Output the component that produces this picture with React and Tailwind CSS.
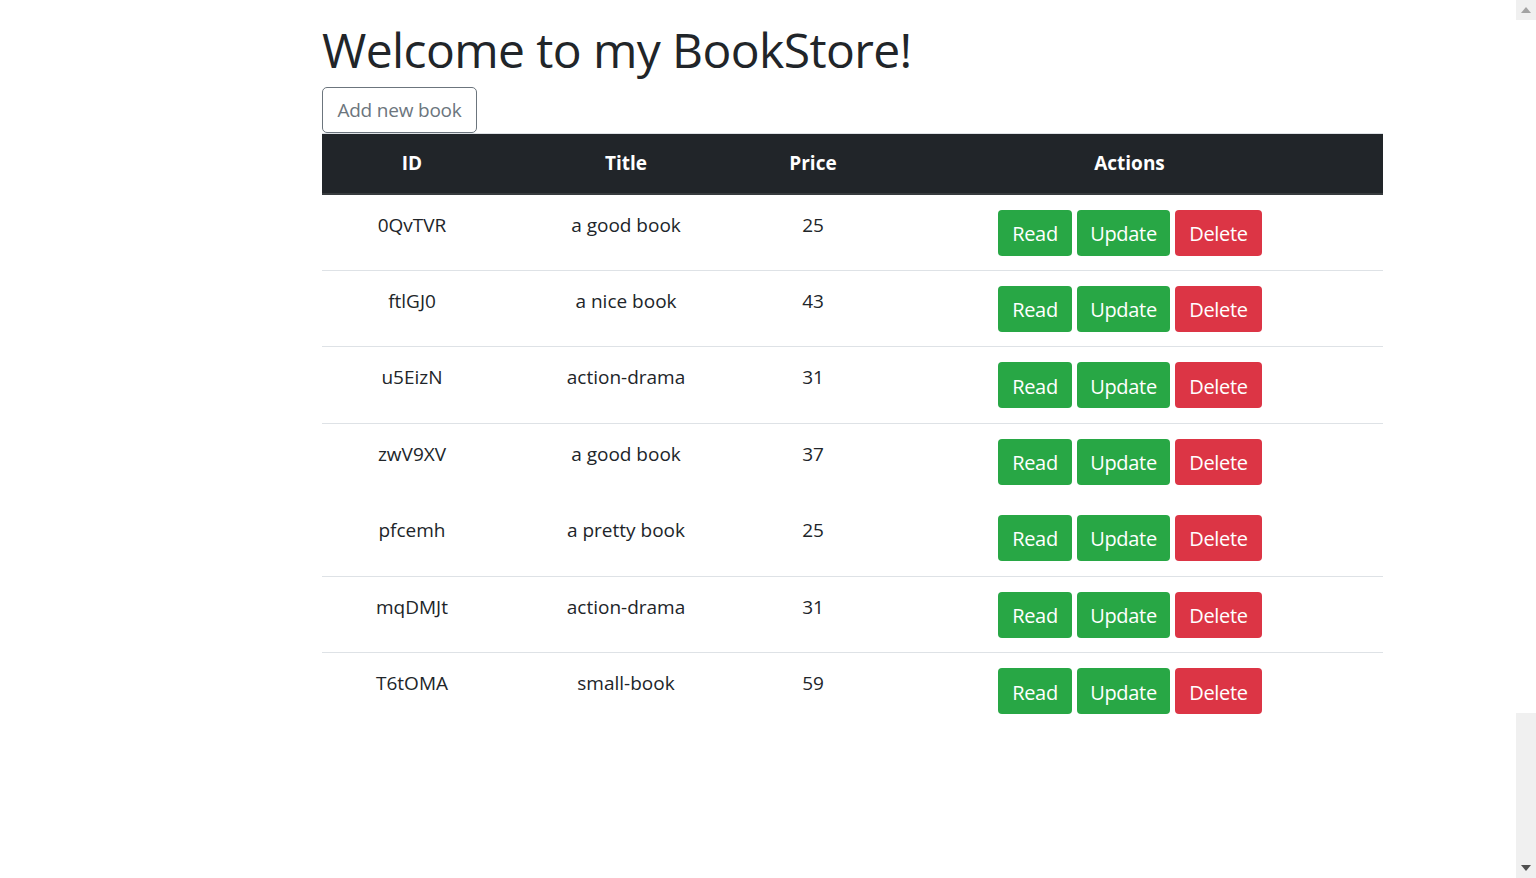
import React from 'react'

const books = [
  { id: '0QvTVR', title: 'a good book', price: 25 },
  { id: 'ftlGJ0', title: 'a nice book', price: 43 },
  { id: 'u5EizN', title: 'action-drama', price: 31 },
  { id: 'zwV9XV', title: 'a good book', price: 37 },
  { id: 'pfcemh', title: 'a pretty book', price: 25 },
  { id: 'mqDMJt', title: 'action-drama', price: 31 },
  { id: 'T6tOMA', title: 'small-book', price: 59 },
]

const App = () => {
  return (
    <div className="flex w-full h-[878px] overflow-hidden bg-white text-[#212529]" style={{ fontFamily: '"Open Sans", "Noto Sans", sans-serif' }}>
      <div className="flex-1 pl-[322px]">
        <div className="w-[1061px]">
          <h1 className="text-[48px] leading-[60px] font-normal tracking-[-0.6px] mt-[20px] mb-[7px]">Welcome to my BookStore!</h1>
          <button className="h-[46px] w-[155px] border border-[#6c757d] rounded-[5px] text-[#6c757d] text-[19px] tracking-[-0.2px] bg-white">
            Add new book
          </button>
          <table className="w-full border-collapse">
            <thead>
              <tr className="bg-[#212529] text-white text-[19px] font-bold border-t border-[#dee2e6] border-b-[2px] border-b-[#373b3e]">
                <th className="w-[180px] h-[60px] text-center">ID</th>
                <th className="w-[248px] text-center">Title</th>
                <th className="w-[126px] text-center">Price</th>
                <th className="text-center">Actions</th>
              </tr>
            </thead>
            <tbody>
              {books.map((b, i) => (
                <tr key={b.id} className={i < 6 && i !== 3 ? 'border-b border-[#dee2e6]' : ''}>
                  <td className="h-[76.5px] align-top pt-[15px] text-center text-[19px] leading-[30px]">{b.id}</td>
                  <td className="align-top pt-[15px] text-center text-[19px] leading-[30px]">{b.title}</td>
                  <td className="align-top pt-[15px] text-center text-[19px] leading-[30px]">{b.price}</td>
                  <td className="align-top pt-[15px]">
                    <div className="flex justify-center gap-[5px] pl-[1px]">
                      <button className="w-[74px] h-[46px] pt-[3px] rounded-[4px] bg-[#28a745] text-white text-[20px] tracking-[-0.3px]">Read</button>
                      <button className="w-[93px] h-[46px] pt-[3px] rounded-[4px] bg-[#28a745] text-white text-[20px] tracking-[-0.3px]">Update</button>
                      <button className="w-[87px] h-[46px] pt-[3px] rounded-[4px] bg-[#dc3545] text-white text-[20px] tracking-[-0.3px]">Delete</button>
                    </div>
                  </td>
                </tr>
              ))}
            </tbody>
          </table>
        </div>
      </div>
      {/* fake scrollbar */}
      <div className="w-[20px] h-[878px] flex flex-col">
        <div className="h-[20px] bg-[#f0f0f0] flex items-center justify-center">
          <svg width="10" height="6" viewBox="0 0 10 6"><path d="M5 0 L10 6 L0 6 Z" fill="#a3a3a3" /></svg>
        </div>
        <div className="h-[693px] bg-white"></div>
        <div className="flex-1 bg-[#f0f0f0] flex items-end justify-center pb-[7px]">
          <svg width="10" height="6" viewBox="0 0 10 6"><path d="M0 0 L10 0 L5 6 Z" fill="#505050" /></svg>
        </div>
      </div>
    </div>
  )
}

export default App
